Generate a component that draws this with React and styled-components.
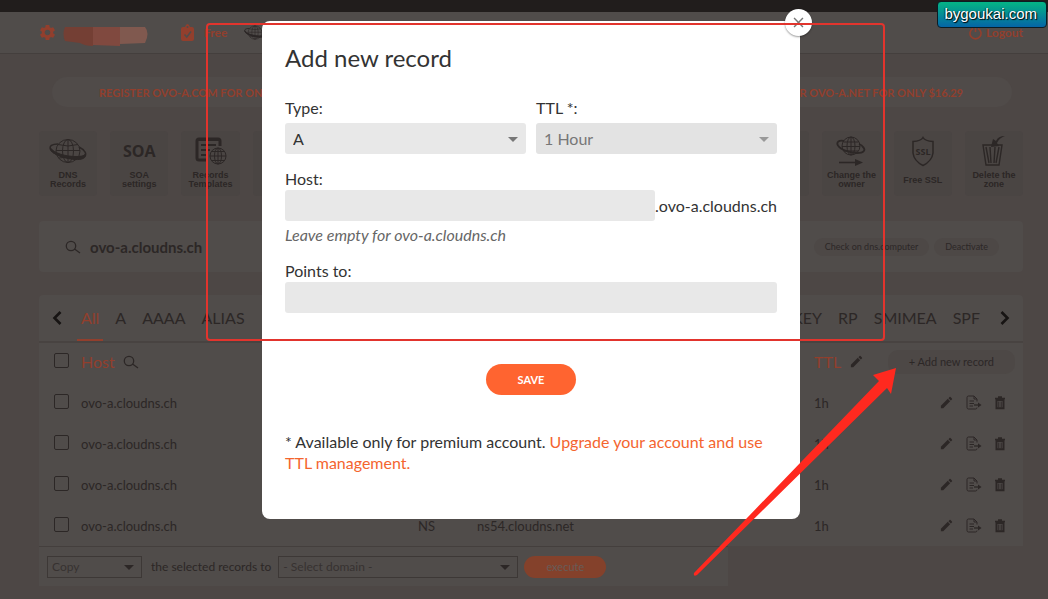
import { useState } from 'react'
import styled, { createGlobalStyle } from 'styled-components'
import { MdSettings, MdEdit, MdClose } from 'react-icons/md'

const ink = '#2c2726'
const ember = '#923f2d'

const GlobalStyle = createGlobalStyle`
  * {
    box-sizing: border-box;
  }
  body {
    margin: 0;
    background: #4d4745;
    color: ${ink};
    font-family: Lato, 'Open Sans', sans-serif;
    overflow: hidden;
  }
  button, input, select {
    font-family: inherit;
    margin: 0;
  }
  a {
    text-decoration: none;
  }
`

const Page = styled.div`
  position: relative;
  min-height: 100vh;
`

const TopStrip = styled.div`
  height: 12px;
  background: #211d1c;
`

const Header = styled.header`
  display: flex;
  align-items: center;
  height: 42px;
  padding: 0 25px 0 38px;
  background: #504c4a;
  border-bottom: 1px solid #443f3d;
  color: ${ember};
  font-size: 12px;
  font-weight: 700;
`

const HeaderLink = styled.a`
  display: flex;
  align-items: center;
  gap: ${(props) => (props.$end ? '4px' : '10px')};
  margin-left: ${(props) => (props.$end ? 'auto' : '0')};
  color: ${ember};
`

const UserBlur = styled.svg`
  margin: 6px 32px 0 6px;
`

const PlanetSlot = styled.span`
  display: flex;
  margin-left: 17px;
  color: ${ink};
`

const Main = styled.main`
  padding: 23px 25px 0 39px;
`

const Promo = styled.div`
  display: flex;
  justify-content: space-between;
  align-items: center;
  height: 30px;
  margin: 0 11px 0 13px;
  padding: 0 49px 0 47px;
  border-radius: 15px;
  background: #504b49;
`

const PromoLink = styled.a`
  color: ${ember};
  font-size: 11px;
  font-weight: 700;
`

const Tiles = styled.nav`
  display: grid;
  grid-template-columns: repeat(14, 1fr);
  column-gap: 13px;
  margin: 24px 0 25px;
`

const Tile = styled.a`
  display: flex;
  flex-direction: column;
  align-items: center;
  height: 65px;
  padding-top: 2px;
  border-radius: 4px;
  background: #4a4543;
  color: ${ink};
`

const TileIcon = styled.span`
  display: flex;
  align-items: center;
  justify-content: center;
  height: 36px;
  font: 700 16px 'Open Sans', sans-serif;
`

const TileLabel = styled.span`
  display: flex;
  align-items: center;
  flex: 1;
  max-height: 22px;
  font: 700 9px/9px 'Liberation Sans', sans-serif;
  text-align: center;
  white-space: pre-line;
`

const ZoneBar = styled.section`
  display: flex;
  align-items: center;
  height: 51px;
  margin-bottom: 23px;
  padding: 0 24px 0 26px;
  border-radius: 4px;
  background: #504c4a;
`

const ZoneName = styled.h1`
  margin: 0 auto 0 9px;
  font-size: 15px;
  font-weight: 700;
`

const SmallButton = styled.button`
  height: ${(props) => (props.$large ? '24px' : '18px')};
  margin-left: 5px;
  padding: 0 ${(props) => (props.$large ? '21px' : '11px')};
  border: 0;
  border-radius: 10px;
  background: #4d4846;
  color: ${ink};
  font-size: ${(props) => (props.$large ? '11px' : '9px')};
  white-space: nowrap;
`

const Records = styled.section`
  background: #504c4a;
  border-radius: 4px 4px 0 0;
`

const Tabs = styled.div`
  display: flex;
  align-items: stretch;
  gap: 8px;
  height: 48px;
  padding: 0 13px;
  border-bottom: 2px solid #484341;
`

const ArrowButton = styled.button`
  display: flex;
  align-items: center;
  margin-left: ${(props) => (props.$end ? '8px' : '0')};
  padding: 0 ${(props) => (props.$end ? '0' : '7px')} 0 0;
  border: 0;
  background: none;
  color: #171413;
`

const Tab = styled.button`
  margin-left: ${(props) => (props.$push ? 'auto' : '0')};
  padding: 0 4px;
  border: 0;
  border-bottom: 2px solid ${(props) => (props.$active ? ember : 'transparent')};
  background: none;
  color: ${(props) => (props.$active ? ember : ink)};
  font-size: 16px;
`

const Table = styled.table`
  width: 100%;
  table-layout: fixed;
  border-collapse: collapse;
  font-size: 13px;

  th {
    height: 39px;
    padding: 0 0 2px;
    color: ${ember};
    font-size: 16px;
    font-weight: 400;
    text-align: left;
  }
  td {
    height: 41px;
    padding: 0;
  }
`

const Col = styled.col`
  width: ${(props) => props.$width};
`

const Inline = styled.span`
  display: flex;
  align-items: center;
  justify-content: ${(props) => (props.$end ? 'flex-end' : 'flex-start')};
  gap: ${(props) => props.$gap || 8}px;
  padding-right: ${(props) => props.$right || 0}px;

  svg {
    color: ${ink};
  }
`

const Check = styled.input`
  appearance: none;
  display: block;
  width: 15px;
  height: 15px;
  margin: 0 0 3px 15px;
  border: 1px solid ${ink};
  border-radius: 2px;
`

const IconButton = styled.button`
  display: flex;
  padding: 0;
  border: 0;
  background: none;
  color: ${ink};
`

const BulkBar = styled.form`
  display: flex;
  align-items: center;
  width: 70%;
  height: 40px;
  padding: 0 8px;
  background: #504c4a;
  border-top: 1px solid #443f3d;
  font-size: 12px;
`

const BulkLabel = styled.label`
  margin: 0 7px 0 9px;
  white-space: nowrap;
`

const SelectBox = styled.span`
  position: relative;
  display: block;
  width: ${(props) => props.$width || '100%'};

  &::after {
    content: '';
    position: absolute;
    top: calc(50% - 2px);
    right: 8px;
    border: 5px solid transparent;
    border-top-color: ${(props) => props.$caret || ink};
    border-bottom: 0;
    pointer-events: none;
  }
`

const BulkSelect = styled.select`
  appearance: none;
  display: block;
  width: 100%;
  height: 22px;
  padding: 0 4px;
  border: 1px solid #3d3836;
  border-radius: 0;
  background: transparent;
  color: #373231;
  font-size: 12px;
`

const Pill = styled.button`
  height: ${(props) => (props.$small ? '22px' : '31px')};
  width: ${(props) => (props.$small ? '82px' : '90px')};
  margin-left: ${(props) => (props.$small ? '6px' : '0')};
  padding: 0;
  border: 0;
  border-radius: 16px;
  background: ${(props) => (props.$small ? '#84412b' : '#ff6430')};
  color: ${(props) => (props.$small ? '#685c58' : '#fff')};
  font-size: 11px;
  font-weight: ${(props) => (props.$small ? 400 : 700)};
`

const Overlay = styled.div`
  position: absolute;
  inset: 0;
  display: flex;
  justify-content: center;
  align-items: flex-start;
  padding: 21px 0 0 14px;
`

const Modal = styled.div`
  position: relative;
  width: 538px;
  padding: 21px 23px 46px;
  border-radius: 8px;
  background: #fff;
  color: #333;
  font-size: 16px;
  line-height: 21px;
`

const CloseButton = styled.button`
  position: absolute;
  top: -12px;
  right: -12px;
  display: flex;
  align-items: center;
  justify-content: center;
  width: 27px;
  height: 27px;
  padding: 0;
  border: 0;
  border-radius: 50%;
  background: #fff;
  box-shadow: 0 1px 2px rgb(0 0 0 / 40%);
  color: #777;
`

const ModalTitle = styled.h2`
  margin: 0 0 23px;
  font-size: 24px;
  line-height: 32px;
  font-weight: 400;
`

const FieldRow = styled.div`
  display: grid;
  grid-template-columns: 1fr 1fr;
  gap: 10px;
  margin-bottom: 14px;
`

const FieldLabel = styled.label`
  display: block;
  margin-bottom: ${(props) => props.$space || 1}px;
`

const FieldSelect = styled.select`
  appearance: none;
  display: block;
  width: 100%;
  height: 31px;
  padding: 0 8px;
  border: 0;
  border-radius: 3px;
  background: #e8e8e8;
  color: #333;
  font-size: 16px;
  opacity: 1;

  &:disabled {
    background: #e3e3e3;
    color: #777;
  }
`

const TextInput = styled.input`
  display: block;
  flex: 1;
  width: 100%;
  min-width: 0;
  height: 31px;
  padding: 0 8px;
  border: 0;
  border-radius: 3px;
  background: #e8e8e8;
  font-size: 16px;
`

const HostLine = styled.div`
  display: flex;
  align-items: center;
`

const Hint = styled.em`
  display: block;
  margin: 3px 0 15px;
  color: #666;
`

const Actions = styled.div`
  display: flex;
  justify-content: center;
  margin: 51px 0 36px;
`

const Note = styled.p`
  margin: 0;

  a {
    color: #f4652f;
  }
`

const Highlight = styled.div`
  position: absolute;
  top: 23px;
  left: 206px;
  width: 679px;
  height: 318px;
  border: 2px solid #e2342d;
  border-radius: 4px;
  pointer-events: none;
`

const Pointer = styled.svg`
  position: absolute;
  top: 365px;
  left: 690px;
  pointer-events: none;
`

const SiteBadge = styled.a`
  position: absolute;
  top: 1px;
  right: 1px;
  padding: 3px 9px 4px 6px;
  border: 1px solid #0b1d26;
  border-radius: 4px;
  background: linear-gradient(#04b585, #0565a6);
  color: #fff;
  font: 15px/18px 'Liberation Sans', sans-serif;
  text-shadow: 1px 1px 1px #000, -1px 0 1px #0008;
`

function Planet({ size = 38 }) {
  return (
    <svg width={size} height={(size * 26) / 38} viewBox="0 0 38 26" fill="none" stroke="currentColor">
      <ellipse cx="19" cy="13" rx="12" ry="11.5" />
      <ellipse cx="19" cy="13" rx="5.500" ry="11.5" />
      <path d="M19 1.500v23M9 6.500q10 3 20 0M7 12.500h24M10 20q9-2 18 0" />
      <path d="M9 6C3 6 0 8 1.500 11.500 4 16 16 20 27 20c8 0 11-3 9-6-1-2-3-3.500-6-5" strokeWidth="1.500" />
      <path d="M1.500 10C5 15 16 18.500 27 18.500c6 0 9-1 9.500-3C38 20 33 22 26 21.500 14 20.500 1 15.500 1.500 10z" fill="currentColor" />
    </svg>
  )
}

function Magnifier() {
  return (
    <svg width="16" height="15" viewBox="0 0 16 15" fill="none" stroke={ink} strokeWidth="1.300">
      <circle cx="6" cy="7" r="4.700" />
      <path d="M9.500 10 15 14" />
    </svg>
  )
}

function Clipboard() {
  return (
    <svg width="13" height="18" viewBox="0 0 13 18">
      <path fill={ember} d="M2 3h2q1-3 2.500-3T9 3h2q2 0 2 2v10q0 2-2 2H2q-2 0-2-2V5q0-2 2-2z" />
      <circle cx="6.500" cy="3" r="1" fill="#504c4a" />
      <path d="M3.500 10.500 5.800 13 10 7.500" fill="none" stroke="#504c4a" strokeWidth="1.600" />
    </svg>
  )
}

function Power() {
  return (
    <svg width="13" height="14" viewBox="0 0 13 14" fill="none" stroke="currentColor" strokeWidth="1.600">
      <path d="M4 2.500a5.500 5.500 0 1 0 5 0M6.500 1v5" />
    </svg>
  )
}

function Templates() {
  return (
    <svg width="32" height="28" viewBox="0 0 32 28" fill="none" stroke="currentColor">
      <path d="M25 9V4q0-2-2-2H4Q2 2 2 4v17q0 2 2 2h9" strokeWidth="3" />
      <path d="M2 3h23M6 8h15M6 13h9M6 18h7" strokeWidth="2.200" />
      <circle cx="23" cy="19" r="8" />
      <ellipse cx="23" cy="19" rx="3.500" ry="8" />
      <path d="M23 11v16M15 19h16M17 14.500h12M17 23.500h12" />
    </svg>
  )
}

function Transfer() {
  return (
    <svg width="30" height="30" viewBox="0 0 30 30" fill="none" stroke="currentColor">
      <ellipse cx="15" cy="10" rx="9" ry="9" />
      <ellipse cx="15" cy="10" rx="4" ry="9" />
      <path d="M15 1v18M7.500 6h15M6 10.500h18M8 15h14" />
      <path d="M8 5C3 4 0 6 2 9.500 5 14 14 17 21 17s9-3 6-6q-1-2-4-3" strokeWidth="1.800" />
      <path d="M3 26.500h18" strokeWidth="1.600" />
      <path d="m19 23 8 3.500-8 3.500z" fill="currentColor" stroke="none" />
    </svg>
  )
}

function Shield() {
  return (
    <svg width="24" height="32" viewBox="0 0 24 32" fill="none" stroke="currentColor" strokeWidth="1.500">
      <path d="M12 2.500Q10 6 2 6.500V18q1 8 10 12.500Q21 26 22 18V6.500Q14 6 12 2.500z" />
      <text x="12" y="20" textAnchor="middle" fill="currentColor" stroke="none" fontSize="9" fontWeight="700">
        SSL
      </text>
    </svg>
  )
}

function Bin() {
  return (
    <svg width="25" height="32" viewBox="0 0 25 32" fill="none" stroke="currentColor" strokeWidth="1.400">
      <path d="M2 10h19l-3 20H5zM5 12l3 16M9 12l1 16M14 12l-1 16M18 12l-3 16" />
      <path d="M24 1q-7 0-9 5l-3-2-2 8 8-1-2-3q2-5 8-7z" fill="currentColor" stroke="none" />
    </svg>
  )
}

function Export() {
  return (
    <svg width="16" height="15" viewBox="0 0 16 15" fill="none" stroke="currentColor">
      <path d="M11 6.500V4L8 1H2.500Q1 1 1 2.500v10Q1 14 2.500 14h7q1.500 0 1.500-1.500M8 1v3h3M3.500 6H8M3.500 8.500H8M3.500 11H7" />
      <path d="M8 10h6" strokeWidth="1.300" />
      <path d="m12 7.500 3.500 2.500-3.500 2.500z" fill="currentColor" stroke="none" />
    </svg>
  )
}

function Trash() {
  return (
    <svg width="12" height="14" viewBox="0 0 12 14" fill="none" stroke="currentColor">
      <path d="M1 2.500h10M4 1h4" strokeWidth="1.600" />
      <path d="M2.500 4v8.300h7V4z" strokeWidth="2" />
      <path d="M4.800 5.500v6M7.200 5.500v6" />
    </svg>
  )
}

function Chevron({ left }) {
  return (
    <svg width="10" height="16" viewBox="0 0 10 16" fill="none" stroke="currentColor" strokeWidth="2.600">
      <path d={left ? 'M8.500 2 2.500 8l6 6' : 'M1.500 2l6 6-6 6'} />
    </svg>
  )
}

const tiles = [
  { label: 'DNS\nRecords', icon: <Planet /> },
  { label: 'SOA\nsettings', icon: 'SOA' },
  { label: 'Records\nTemplates', icon: <Templates /> },
  {}, {}, {}, {}, {}, {}, {}, {},
  { label: 'Change the\nowner', icon: <Transfer /> },
  { label: 'Free SSL', icon: <Shield /> },
  { label: 'Delete the\nzone', icon: <Bin /> },
]

const tabs = ['All', 'A', 'AAAA', 'ALIAS', 'KEY', 'RP', 'SMIMEA', 'SPF']

const records = [
  { id: 1, host: 'ovo-a.cloudns.ch', ttl: '1h' },
  { id: 2, host: 'ovo-a.cloudns.ch', ttl: '1h' },
  { id: 3, host: 'ovo-a.cloudns.ch', ttl: '1h' },
  { id: 4, host: 'ovo-a.cloudns.ch', type: 'NS', target: 'ns54.cloudns.net', ttl: '1h' },
]

function RecordForm() {
  return (
    <Modal role="dialog" aria-labelledby="modal-title">
      <CloseButton aria-label="Close">
        <MdClose size={17} />
      </CloseButton>
      <ModalTitle id="modal-title">Add new record</ModalTitle>
      <FieldRow>
        <div>
          <FieldLabel htmlFor="type" $space={5}>Type:</FieldLabel>
          <SelectBox $caret="#777">
            <FieldSelect id="type">
              <option>A</option>
            </FieldSelect>
          </SelectBox>
        </div>
        <div>
          <FieldLabel htmlFor="ttl" $space={5}>TTL *:</FieldLabel>
          <SelectBox $caret="#999">
            <FieldSelect id="ttl" disabled>
              <option>1 Hour</option>
            </FieldSelect>
          </SelectBox>
        </div>
      </FieldRow>
      <FieldLabel htmlFor="host">Host:</FieldLabel>
      <HostLine>
        <TextInput id="host" />
        <span>.ovo-a.cloudns.ch</span>
      </HostLine>
      <Hint>Leave empty for ovo-a.cloudns.ch</Hint>
      <FieldLabel htmlFor="points">Points to:</FieldLabel>
      <TextInput id="points" />
      <Actions>
        <Pill>SAVE</Pill>
      </Actions>
      <Note>
        * Available only for premium account. <a href="#upgrade">Upgrade your account and use TTL management.</a>
      </Note>
    </Modal>
  )
}

export default function App() {
  const [active, setActive] = useState('All')

  return (
    <Page>
      <GlobalStyle />
      <TopStrip />
      <Header>
        <MdSettings size={19} />
        <UserBlur width="86" height="22" viewBox="0 0 86 22">
          <path fill="#743f34" d="M2 2h28v19q-8 0-13-3L2 16q-3-7 0-14z" />
          <path fill="#80493f" d="M30 2h27v19l-27-1z" />
          <path fill="#80594f" d="M57 2h25q5 6 0 16l-25 1z" />
        </UserBlur>
        <HeaderLink href="#plan">
          <Clipboard />
          Free
        </HeaderLink>
        <PlanetSlot>
          <Planet size={22} />
        </PlanetSlot>
        <HeaderLink href="#logout" $end>
          <Power />
          Logout
        </HeaderLink>
      </Header>
      <Main>
        <Promo>
          <PromoLink href="#com">REGISTER OVO-A.COM FOR ONLY</PromoLink>
          <PromoLink href="#net">REGISTER OVO-A.NET FOR ONLY $16.29</PromoLink>
        </Promo>
        <Tiles>
          {tiles.map(({ label, icon }, index) => (
            <Tile key={index} href={label ? '#tools' : undefined}>
              <TileIcon>{icon}</TileIcon>
              <TileLabel>{label}</TileLabel>
            </Tile>
          ))}
        </Tiles>
        <ZoneBar>
          <Magnifier />
          <ZoneName>ovo-a.cloudns.ch</ZoneName>
          <SmallButton>Check on dns.computer</SmallButton>
          <SmallButton>Deactivate</SmallButton>
        </ZoneBar>
        <Records>
          <Tabs>
            <ArrowButton aria-label="Previous types">
              <Chevron left />
            </ArrowButton>
            {tabs.map((tab) => (
              <Tab key={tab} $active={tab === active} $push={tab === 'KEY'} onClick={() => setActive(tab)}>
                {tab}
              </Tab>
            ))}
            <ArrowButton aria-label="Next types" $end>
              <Chevron />
            </ArrowButton>
          </Tabs>
          <Table>
            <colgroup>
              <Col $width="42px" />
              <Col $width="337px" />
              <Col $width="6%" />
              <Col />
              <Col $width="70px" />
              <Col $width="139px" />
            </colgroup>
            <thead>
              <tr>
                <th><Check type="checkbox" aria-label="Select all" /></th>
                <th><Inline>Host <Magnifier /></Inline></th>
                <th />
                <th />
                <th><Inline>TTL <MdEdit size={15} /></Inline></th>
                <th>
                  <Inline $end $right={8}>
                    <SmallButton $large>+ Add new record</SmallButton>
                  </Inline>
                </th>
              </tr>
            </thead>
            <tbody>
              {records.map(({ id, host, type, target, ttl }) => (
                <tr key={id}>
                  <td><Check type="checkbox" aria-label={host} /></td>
                  <td>{host}</td>
                  <td>{type}</td>
                  <td>{target}</td>
                  <td>{ttl}</td>
                  <td>
                    <Inline $end $gap={12} $right={17}>
                      <IconButton aria-label="Edit"><MdEdit size={15} /></IconButton>
                      <IconButton aria-label="Export"><Export /></IconButton>
                      <IconButton aria-label="Delete"><Trash /></IconButton>
                    </Inline>
                  </td>
                </tr>
              ))}
            </tbody>
          </Table>
        </Records>
        <BulkBar>
          <SelectBox $width="95px">
            <BulkSelect aria-label="Action">
              <option>Copy</option>
            </BulkSelect>
          </SelectBox>
          <BulkLabel htmlFor="domain">the selected records to</BulkLabel>
          <SelectBox $width="240px">
            <BulkSelect id="domain">
              <option>- Select domain -</option>
            </BulkSelect>
          </SelectBox>
          <Pill type="button" $small>execute</Pill>
        </BulkBar>
      </Main>
      <Overlay>
        <RecordForm />
      </Overlay>
      <Highlight />
      <Pointer width="210" height="214" viewBox="0 0 210 214">
        <path fill="#ff291f" d="M206 3 183 10l6 6L4 208q-1 4 3 2L197 23l4 6z" />
      </Pointer>
      <SiteBadge href="#home">bygoukai.com</SiteBadge>
    </Page>
  )
}
